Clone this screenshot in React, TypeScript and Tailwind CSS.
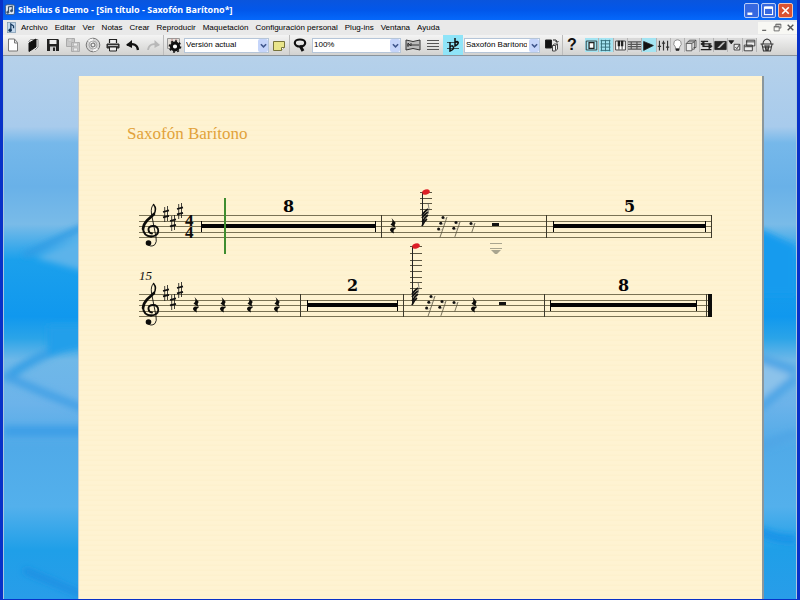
import type { ReactNode } from "react";

const MENUS = [
  "Archivo",
  "Editar",
  "Ver",
  "Notas",
  "Crear",
  "Reproducir",
  "Maquetación",
  "Configuración personal",
  "Plug-ins",
  "Ventana",
  "Ayuda",
];

interface IconProps {
  children: ReactNode;
  className?: string;
}

const Icon: React.FC<IconProps> = ({ children, className = "size-4" }) => (
  <svg
    viewBox="0 0 16 16"
    className={`shrink-0 ${className}`}
    fill="none"
    stroke="#222"
    aria-hidden="true"
  >
    {children}
  </svg>
);

interface ToolButtonProps {
  label: string;
  children: ReactNode;
  active?: boolean;
}

const ToolButton: React.FC<ToolButtonProps> = ({ label, children, active }) => (
  <button
    type="button"
    aria-label={label}
    className={`flex h-5 w-5 shrink-0 items-center justify-center ${
      active ? "bg-[#8fe4f8]" : ""
    }`}
  >
    <Icon>{children}</Icon>
  </button>
);

// Small toggles on the right that show and hide the tool windows
const PanelButton: React.FC<ToolButtonProps> = ({ label, children, active }) => (
  <button
    type="button"
    aria-label={label}
    aria-pressed={!!active}
    className={`flex h-[14px] min-w-0 flex-1 items-center justify-center border-r border-[#b4b4b4] ${
      active ? "bg-[#a4e4f2]" : "bg-[#d9d9d9]"
    }`}
  >
    <Icon className="size-[13px]">{children}</Icon>
  </button>
);

const Combo: React.FC<{ label: string; value: string; className: string }> = ({
  label,
  value,
  className,
}) => (
  <label className={`relative block h-[15px] shrink-0 ${className}`}>
    <select
      aria-label={label}
      defaultValue={value}
      className="block h-full w-full appearance-none overflow-hidden border border-[#b5c5d8] bg-white pr-3 pl-px text-[8px] leading-3 text-black"
    >
      <option>{value}</option>
    </select>
    <span className="pointer-events-none absolute top-px right-px flex h-[13px] w-[10px] items-center justify-center rounded-[2px] bg-[#c5d5fa]">
      <svg viewBox="0 0 8 8" className="size-[7px]" fill="none" stroke="#40578c" strokeWidth="1.8">
        <path d="M1 2.5l3 3 3-3" />
      </svg>
    </span>
  </label>
);

const Divider = () => <span className="h-5 w-px shrink-0 bg-[#bcbcbc]" />;

const TitleBar = () => (
  <header className="flex h-5 shrink-0 items-center bg-linear-to-b from-[#0a55dd] via-[#0257ea] to-[#0568fb] pr-1 pl-px">
    <Icon className="size-3">
      <rect x="2" y="1" width="12" height="13" rx="2" fill="#dce6f4" stroke="#34506f" />
      <path d="M6 11V4l5-1v6" stroke="#34506f" strokeWidth="1.5" />
      <circle cx="5" cy="11" r="1.5" fill="#34506f" stroke="#34506f" />
      <circle cx="10" cy="9" r="1.5" fill="#34506f" stroke="#34506f" />
    </Icon>
    <h1 className="ml-[2px] flex-1 font-['Noto_Sans'] text-[9px] leading-3 font-bold whitespace-pre text-white">
      Sibelius 6 Demo - [Sin título - Saxofón Barítono*]
    </h1>
    <div className="flex gap-[2px]">
      <button type="button" aria-label="Minimizar" className="size-[15px] rounded-[2px] border border-[#b9cdf8] bg-[#3668e0]">
        <Icon className="size-[13px]">
          <path d="M3 12h6" stroke="#fff" strokeWidth="3" />
        </Icon>
      </button>
      <button type="button" aria-label="Restaurar" className="size-[15px] rounded-[2px] border border-[#b9cdf8] bg-[#3668e0]">
        <Icon className="size-[13px]">
          <rect x="3" y="4" width="10" height="9" stroke="#fff" strokeWidth="1.3" />
          <path d="M3 4.500h10" stroke="#fff" strokeWidth="3" />
        </Icon>
      </button>
      <button type="button" aria-label="Cerrar" className="size-[15px] rounded-[2px] border border-[#f0c4b8] bg-[#dc5230]">
        <Icon className="size-[13px]">
          <path d="M4 4l8 8M12 4l-8 8" stroke="#fff" strokeWidth="2" />
        </Icon>
      </button>
    </div>
  </header>
);

const MenuBar = () => (
  <nav className="flex h-[15px] shrink-0 items-center bg-[#e9e9e9] pl-[3px]">
    <Icon className="size-[11px]">
      <rect x="2" y="0.500" width="12" height="15" fill="#c4d8ec" stroke="#7894ac" />
      <path d="M7 12V3l4 3v3" stroke="#15395e" strokeWidth="1.8" />
      <circle cx="6" cy="12" r="2.500" fill="#15395e" stroke="none" />
    </Icon>
    <div className="ml-1 flex flex-1 gap-[7px]">
      {MENUS.map((menu) => (
        <button key={menu} type="button" className="text-[8px] leading-3 whitespace-nowrap text-black">
          {menu}
        </button>
      ))}
    </div>
    <div className="flex bg-[#f8f8f4]">
      <button type="button" aria-label="Minimizar documento" className="flex h-3 w-[13px] items-center justify-center">
        <Icon className="size-[9px]"><path d="M4 13h7" stroke="#555" strokeWidth="2" /></Icon>
      </button>
      <button type="button" aria-label="Restaurar documento" className="flex h-3 w-[13px] items-center justify-center">
        <Icon className="size-[9px]"><path d="M5 6V2h9v7h-3M2 6h9v8H2zM2 7h9M5 3h9" stroke="#666" strokeWidth="1.6" /></Icon>
      </button>
      <button type="button" aria-label="Cerrar documento" className="flex h-3 w-[13px] items-center justify-center">
        <Icon className="size-[9px]"><path d="M3 3l10 10M13 3L3 13" stroke="#555" strokeWidth="2.500" /></Icon>
      </button>
    </div>
  </nav>
);

const Toolbar = () => (
  <div className="flex h-[21px] shrink-0 items-center border-b border-[#8a949c] bg-linear-to-b from-[#f4f4f4] to-[#d2d2d0]">
    <ToolButton label="Nuevo">
      <path d="M3.500 2h6l3 3.500V14h-9zM9.500 2v4h3" fill="#fff" stroke="#777" />
    </ToolButton>
    <ToolButton label="Abrir">
      <path d="M3.500 5l2-2.500H13V10l-3 3" fill="#f4f4f4" stroke="#888" />
      <path d="M4 6l7-4v8l-7 4.500z" fill="#111" stroke="#111" />
    </ToolButton>
    <ToolButton label="Guardar">
      <path d="M2 2h11l1 1v11H2z" fill="#222" stroke="none" />
      <path d="M4.500 3h7v4h-7z" fill="#eee" stroke="none" />
      <path d="M5 9.500h6V14H5z" fill="#ccc" stroke="none" />
      <path d="M9 10.500V14" strokeWidth="2" />
    </ToolButton>
    <ToolButton label="Guardar partes">
      <path d="M1.500 1.500h8v8h-8zM6.500 5.500h8v9h-8z" fill="#c8c8c8" stroke="#aaa" />
      <path d="M8.500 6h4v3h-4zM3 2h4v2H3zM8.500 11h4v3h-4z" fill="#eee" stroke="#bbb" />
    </ToolButton>
    <ToolButton label="Exportar audio">
      <circle cx="8" cy="8" r="6.800" fill="#d5d5d5" stroke="#777" />
      <path d="M8 8L3 3.500A7 7 0 018 1.500zM8 8l5 4.500A7 7 0 018 14.500z" fill="#f5f5f5" stroke="none" />
      <circle cx="8" cy="8" r="4" stroke="#aaa" />
      <circle cx="8" cy="8" r="2" fill="#eee" stroke="#666" />
    </ToolButton>
    <ToolButton label="Imprimir">
      <path d="M4.500 6V2.500h7V6" fill="#eee" strokeWidth="1.200" />
      <path d="M2 7h12v4H2z" fill="#444" stroke="#222" />
      <path d="M4.500 10h7v4h-7z" fill="#eee" />
      <path d="M3 8.500h10" stroke="#bbb" />
    </ToolButton>
    <ToolButton label="Deshacer">
      <path d="M2 8q10-3 11 5" stroke="#111" strokeWidth="2.300" />
      <path d="M1 8l6-5v8z" fill="#111" stroke="none" />
    </ToolButton>
    <ToolButton label="Rehacer">
      <path d="M14 8Q4 5 3 13" stroke="#b8b8b8" strokeWidth="1.800" />
      <path d="M15 8L9.500 3v8z" fill="#b8b8b8" stroke="none" />
    </ToolButton>
    <Divider />
    <ToolButton label="Versiones">
      <path d="M1.500 1.500h12v10h-12z" fill="#e3ded8" stroke="#999" />
      <path d="M6 1.500v4M10 1.500v3" stroke="#b88" />
      <circle cx="9" cy="9.500" r="3.600" fill="#fff" stroke="#111" strokeWidth="3" />
      <circle cx="9" cy="9.500" r="5.600" stroke="#111" strokeWidth="1.500" strokeDasharray="2 2.300" />
    </ToolButton>
    <Combo label="Versión" value="Versión actual" className="w-[85px]" />
    <ToolButton label="Comentario">
      <path d="M2.500 4.500h11v6l-3 3h-8z" fill="#e9e58a" stroke="#77743c" />
      <path d="M10.500 13.500v-3h3" fill="#fff" stroke="#77743c" />
    </ToolButton>
    <Divider />
    <ToolButton label="Zoom">
      <ellipse cx="8" cy="6" rx="5.200" ry="3.500" stroke="#111" strokeWidth="2.200" />
      <path d="M8 8.500l3 5.500" stroke="#111" strokeWidth="3" />
    </ToolButton>
    <Combo label="Nivel de zoom" value="100%" className="ml-[2px] w-[89px]" />
    <span className="w-[2px]" />
    <ToolButton label="Panorama">
      <path d="M1 3q7 3 14 0v10q-7-3-14 0z" fill="#bbb" stroke="#333" />
      <path d="M2 8h12M3 10V6l3 3V6" stroke="#333" />
    </ToolButton>
    <ToolButton label="Vista de pautas">
      <path d="M2 3.500h12M2 6.500h12M2 9.500h12M2 12.500h12" stroke="#555" />
    </ToolButton>
    <ToolButton label="Transportar partitura" active>
      <path d="M2 5.500h12M2 11.500h12" stroke="#38545e" />
      <path d="M5 5v9q5-2 3-4.500Q7 8 5 10M10 1v8q4-2 3-4-1-1-3 .500" stroke="#111" strokeWidth="1.500" />
    </ToolButton>
    <Combo label="Parte" value="Saxofón Barítono" className="ml-px w-[76px]" />
    <span className="w-[2px]" />
    <ToolButton label="Cambiar ventana">
      <path d="M1.500 3h6v8h-6z" fill="#111" />
      <path d="M8.500 8.500l2-1.500h3v5l-2 2h-3zM8.500 8.500h3v5M11.500 8.500l2-1.500" fill="#eee" stroke="#444" />
      <path d="M9 3q4-1 4 2M11.500 4l1.500 1.500L14.500 4" strokeWidth="1" />
    </ToolButton>
    <Divider />
    <button type="button" aria-label="Ayuda" className="w-[18px] shrink-0 text-[16px] leading-4 font-bold text-[#111]">
      ?
    </button>
    <div className="ml-1 flex w-[172px] shrink-0">
      <PanelButton label="Navegador" active>
        <path d="M1.500 2.500h13v11h-13z" />
        <path d="M5 4.500h6v7H5z" fill="#fff" strokeWidth="1.500" />
      </PanelButton>
      <PanelButton label="Teclado numérico" active>
        <path d="M3 1v14M8 1v14M13 1v14M2 2h12M2 6h12M2 10h12M2 14h12" stroke="#39717c" strokeWidth="1.200" />
      </PanelButton>
      <PanelButton label="Teclado">
        <path d="M2 2.500h12v11H2zM6 8v5M10 8v5" fill="#fff" />
        <path d="M6 2v7M10 2v7" strokeWidth="3" />
      </PanelButton>
      <PanelButton label="Diapasón">
        <path d="M0 3.500h16M0 6.500h16M0 9.500h16M0 12.500h16M4 3v10M11 3v10" stroke="#555" strokeWidth="1.500" />
      </PanelButton>
      <PanelButton label="Reproducción" active>
        <path d="M2 3l12 5-12 6z" fill="#111" />
      </PanelButton>
      <PanelButton label="Mezclador">
        <path d="M3 2v12M8 2v12M13 2v12M1 9h4M6 5h4M11 10h4" stroke="#333" strokeWidth="1.400" />
      </PanelButton>
      <PanelButton label="Ideas">
        <path d="M5.500 10Q2 7 4 3q4-4 8 0 2 4-1.500 7v3h-5z" fill="#fff" stroke="#777" />
        <path d="M6 13h4" strokeWidth="3" />
      </PanelButton>
      <PanelButton label="Partes">
        <path d="M5.500 1.500h8v9h-3M3.500 3.500h8v9h-3" fill="#eee" stroke="#444" />
        <path d="M1.500 5.500h7v9h-7zM1.500 5.500l4-4M8.500 5.500l5-4" fill="#eee" stroke="#444" />
      </PanelButton>
      <PanelButton label="Vídeo">
        <path d="M1 3h9M1 13h13M14 9H3M2 6h12" strokeWidth="1.500" />
        <path d="M5 3v6L1 6zM11 6v6l4-3z" fill="#222" />
      </PanelButton>
      <PanelButton label="Comparar">
        <path d="M1 3h14v10H1z" fill="#222" />
        <path d="M4 11l7-7h3l-7 7z" fill="#bbb" stroke="none" />
      </PanelButton>
      <PanelButton label="Propiedades">
        <path d="M1 2h6L4 6z" fill="#222" />
        <path d="M7.500 6.500h7v7h-7zM9 10l2 2 3-5" fill="#eee" />
      </PanelButton>
      <PanelButton label="Ventanas">
        <path d="M4.500 1.500h10v7h-10zM1.500 7.500h10v7h-10zM4 3.500h10M2 9.500h9" fill="#eee" />
      </PanelButton>
    </div>
    <ToolButton label="Tienda">
      <path d="M1.500 7h13M3 7.500l1.500 6.500h7L13 7.500M4 7q0-4 4-5 4 1 4 5M4 10h8M6 8l1 6M10 8l-1 6M8 8v6" stroke="#333" strokeWidth="1.100" />
    </ToolButton>
  </div>
);

const Backdrop = () => (
  <svg
    viewBox="0 0 800 544"
    preserveAspectRatio="none"
    className="absolute inset-0 h-full w-full"
    aria-hidden="true"
  >
    <defs>
      <linearGradient id="sky" x1="0" y1="0" x2="0" y2="1">
        <stop offset="0" stopColor="#b6d1ea" />
        <stop offset="0.130" stopColor="#a8cbec" />
        <stop offset="0.160" stopColor="#76b8ea" />
        <stop offset="0.240" stopColor="#69b1e8" />
        <stop offset="0.310" stopColor="#79bbe8" />
        <stop offset="0.375" stopColor="#1ba0ec" />
        <stop offset="0.480" stopColor="#1098ee" />
        <stop offset="0.520" stopColor="#2ba4e8" />
        <stop offset="0.560" stopColor="#6fb8e8" />
        <stop offset="0.640" stopColor="#6cb3ea" />
        <stop offset="0.720" stopColor="#50aae8" />
        <stop offset="0.830" stopColor="#53b0ec" />
        <stop offset="0.910" stopColor="#1f9fe8" />
        <stop offset="1" stopColor="#289de9" />
      </linearGradient>
      <filter id="soft" x="-10%" y="-10%" width="120%" height="120%">
        <feGaussianBlur stdDeviation="3" />
      </filter>
    </defs>
    <rect width="800" height="544" fill="url(#sky)" />
    <g filter="url(#soft)">
      <path d="M32 202l50-22v36z" fill="#5cb3ea" />
      <path d="M20 200l62-30" stroke="#2f9be4" strokeWidth="6" />
      <path d="M0 324q40-30 82-38" fill="none" stroke="#39a0e6" strokeWidth="9" />
      <path d="M44 270h38v22l-38 8z" fill="#239fea" />
      <path d="M0 320q40 18 82 34" fill="none" stroke="#45a2e6" strokeWidth="8" />
      <path d="M0 376h82" stroke="#3c9fe7" strokeWidth="11" />
      <path d="M20 515l60 25" stroke="#1a8ee2" strokeWidth="6" />
      <path d="M762 172l38 18v50h-38z" fill="#169bee" />
      <path d="M762 303l38 14-38 28z" fill="#8cc2ea" />
      <path d="M762 302l38 14M762 354l38-32M762 392l38-14" stroke="#4fa6e6" strokeWidth="9" />
      <path d="M762 476q20 9 38 8" fill="none" stroke="#1893e8" strokeWidth="9" />
    </g>
  </svg>
);

/* ---- Notation. x runs along the staff, y is 0 on the top staff line. ---- */

const LINE_YS = [0, 6, 11, 17, 22];

const Staff = () => (
  <g fill="#7a7355">
    {LINE_YS.map((y) => (
      <rect key={y} x="0" y={y} width="573" height="1" />
    ))}
  </g>
);

const Barline = ({ x }: { x: number }) => (
  <rect x={x} y="0" width="1" height="23" fill="#3d3a2c" />
);

const Sharp = ({ x, y }: { x: number; y: number }) => (
  <g transform={`translate(${x} ${y})`} stroke="#111" fill="none">
    <path d="M-1.300 -7V8M1.500 -8V7" strokeWidth="0.800" />
    <path d="M-3 -2l6-1.600M-3 3.400l6-1.600" strokeWidth="1.800" />
  </g>
);

const TrebleClef = () => (
  <g stroke="#0c0c0a" fill="none" strokeLinecap="round">
    <path d="M8 29Q12 33 16 29.500Q18 27 17 22L12.500 -1Q11.500 -8 14.500 -10.500" strokeWidth="0.900" />
    <path d="M14.500 -10.500Q18.500 -6 14.500 0" strokeWidth="1.500" />
    <path d="M15 -1Q12 2 8.500 5Q4.500 9 4 14" strokeWidth="2.600" />
    <path d="M4 13.500Q4.500 21 12 21.500" strokeWidth="2" />
    <path d="M12 21.500Q19 21 19.300 16Q19 11 14 11" strokeWidth="1.800" />
    <path d="M14.500 11Q9 11 9.500 15Q10 18.500 13 18.500" strokeWidth="1.900" />
    <circle cx="9.500" cy="28" r="2.800" fill="#0c0c0a" stroke="none" />
  </g>
);

const Signature = () => (
  <>
    <TrebleClef />
    <Sharp x={27} y={-1} />
    <Sharp x={34} y={8} />
    <Sharp x={41} y={-4} />
  </>
);

const MultiRest = ({ x1, x2, count }: { x1: number; x2: number; count: number }) => (
  <g fill="#050505">
    <rect x={x1} y="9" width={x2 - x1} height="4" />
    <rect x={x1} y="6" width="1" height="11" />
    <rect x={x2 - 1} y="6" width="1" height="11" />
    <text
      x={(x1 + x2) / 2}
      y="-3"
      textAnchor="middle"
      className="font-['DejaVu_Serif'] text-[16px] font-bold"
    >
      {count}
    </text>
  </g>
);

// Upper zigzag and the separate lower hook
const QuarterRest = ({ x }: { x: number }) => (
  <g transform={`translate(${x} 3)`} fill="#0c0c0a">
    <path d="M-1.500 0L2.800 5Q.500 7 3 10.500L-2.500 6.500Q.800 4 -1.500 0z" />
    <path d="M3 10.500Q-.500 11.500 1 15.500Q-4.500 13 -2.500 10.500Q-1 8.500 3 10.500z" />
  </g>
);

// One dot per flag: 1 = eighth, 2 = sixteenth, 3 = thirty-second
const ShortRest = ({ x, dots, top }: { x: number; dots: number; top: number }) => (
  <g transform={`translate(${x} ${top})`}>
    <path
      d={`M4 0L${4 - (dots + 0.7) * 1.900} ${(dots + 0.700) * 5.500}`}
      stroke="#55503c"
      strokeWidth="0.800"
    />
    {Array.from({ length: dots }, (_, i) => (
      <g key={i} transform={`translate(${-2.200 * i} ${5.700 * i})`}>
        <circle cx="0" cy="0.500" r="1.500" fill="#111" />
        <path d="M0 2q3 0 4-2" stroke="#777" strokeWidth="0.400" fill="none" />
      </g>
    ))}
  </g>
);

const HalfRest = ({ x }: { x: number }) => (
  <rect x={x} y="8" width="7" height="3" fill="#111" />
);

const HighNote = ({ x, ledgers }: { x: number; ledgers: number[] }) => {
  const top = ledgers[0];
  return (
    <g>
      <g fill="#5c5742">
        {ledgers.map((y) => (
          <rect key={y} x={x - 2} y={y} width="12" height="1" />
        ))}
      </g>
      <rect x={x} y={top} width="1" height={11 - top} fill="#222" />
      <path
        d={`M${x} 0q3-4 6-6M${x} 3q3-4 6-6M${x} 7q3-5 6-7M${x} 11q2-5 5-7`}
        stroke="#111"
        strokeWidth="1.700"
        fill="none"
      />
      <path d={`M${x + 6} -1Q${x + 8} -6 ${x + 6} -12`} stroke="#555" strokeWidth="0.700" fill="none" />
      <ellipse
        cx={x + 4}
        cy={top}
        rx="3.900"
        ry="2.600"
        fill="#dc1f26"
        transform={`rotate(-18 ${x + 4} ${top})`}
      />
    </g>
  );
};

const Score = () => (
  <>
    <svg viewBox="0 -28 574 68" className="mt-[43px] block w-full overflow-visible" role="img" aria-label="Sistema 1">
      <Staff />
      <Signature />
      <text className="font-['Liberation_Serif'] text-[17px] font-bold" fill="#0c0c0a">
        <tspan x="46" y="11">4</tspan>
        <tspan x="46" y="23">4</tspan>
      </text>
      <MultiRest x1={62} x2={237} count={8} />
      <Barline x={242} />
      <QuarterRest x={254} />
      <HighNote x={283} ledgers={[-23, -17, -12, -6]} />
      <ShortRest x={304} dots={3} top={2} />
      <ShortRest x={317} dots={2} top={7} />
      <ShortRest x={332} dots={1} top={8} />
      <HalfRest x={353} />
      <g fill="#a9a58f">
        <rect x="351" y="28" width="12" height="1" />
        <rect x="351" y="33" width="12" height="1" />
        <path d="M352 35h10l-4 4h-2z" />
      </g>
      <Barline x={407} />
      <MultiRest x1={414} x2={567} count={5} />
      <Barline x={572} />
      {/* Playback line */}
      <rect x="85" y="-17" width="2" height="56" fill="#3f8d2f" />
    </svg>
    <svg viewBox="0 -28 574 68" className="mt-[11px] block w-full overflow-visible" role="img" aria-label="Sistema 2">
      <Staff />
      <Signature />
      <text x="0" y="-14" className="font-['Liberation_Serif'] text-[13px] italic" fill="#111">
        15
      </text>
      <QuarterRest x={57} />
      <QuarterRest x={84} />
      <QuarterRest x={111} />
      <QuarterRest x={138} />
      <Barline x={161} />
      <MultiRest x1={168} x2={259} count={2} />
      <Barline x={264} />
      <HighNote x={273} ledgers={[-48, -41, -34, -29, -23, -17, -12, -6]} />
      <ShortRest x={292} dots={3} top={2} />
      <ShortRest x={303} dots={2} top={7} />
      <ShortRest x={315} dots={1} top={8} />
      <QuarterRest x={335} />
      <HalfRest x={360} />
      <Barline x={405} />
      <MultiRest x1={411} x2={558} count={8} />
      <Barline x={567} />
      <rect x="569" y="0" width="4" height="23" fill="#0c0c0a" />
    </svg>
  </>
);

export default function App() {
  return (
    <div className="flex h-screen flex-col overflow-hidden border-r-[3px] border-b border-l-[3px] border-[#0831c8] bg-[#e4e4e4] font-['Liberation_Sans',sans-serif]">
      <TitleBar />
      <MenuBar />
      <Toolbar />
      <main className="relative flex min-h-0 flex-1 border-x border-[#a9c6de]">
        <Backdrop />
        <section className="relative mt-5 mr-8 ml-[75px] flex-1 border-r-2 border-[#8b979c] bg-[#fdf2d0] bg-[repeating-linear-gradient(to_bottom,#fef3d2_0px,#fef3d2_3px,#fdf1cd_4px,#fdf1cd_5px)] pt-[48px] pr-[49px] pl-[60px] shadow-[-1px_0_0_#c4ccd0]">
          <h2 className="-ml-3 font-['Liberation_Serif',serif] text-[17px] leading-5 text-[#e2a23a]">
            Saxofón Barítono
          </h2>
          <Score />
        </section>
      </main>
    </div>
  );
}
